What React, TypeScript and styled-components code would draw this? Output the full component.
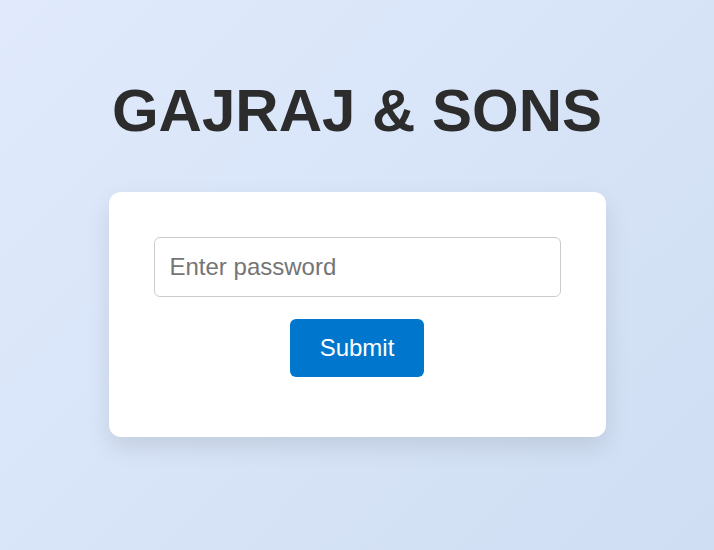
import React from 'react';
import styled, { createGlobalStyle } from 'styled-components';

const GlobalStyle = createGlobalStyle`
  html, body {
    margin: 0;
    padding: 0;
  }
  body {
    font-family: "Liberation Sans", Arial, sans-serif;
  }
`;

const Page = styled.div`
  min-height: 100vh;
  box-sizing: border-box;
  background: linear-gradient(135deg, #e0eafc, #cfdef3);
  display: flex;
  flex-direction: column;
  align-items: center;
  padding-top: 76px;
`;

const Title = styled.h1`
  margin: 0 0 47px;
  font-size: 60px;
  font-weight: 700;
  line-height: 69px;
  color: #2c2c2c;
`;

const Card = styled.form`
  width: 497px;
  box-sizing: border-box;
  background: #fff;
  border-radius: 12px;
  padding: 45px 45px 60px;
  box-shadow: 0 10px 25px rgba(0, 0, 0, 0.1);
  display: flex;
  flex-direction: column;
  align-items: center;
  gap: 22px;
`;

const PasswordInput = styled.input`
  width: 100%;
  box-sizing: border-box;
  padding: 15px;
  font-family: "Liberation Sans", Arial, sans-serif;
  font-size: 24px;
  line-height: normal;
  border: 1px solid #ccc;
  border-radius: 6px;
  color: #222;
  outline: none;

  &::placeholder {
    color: #757575;
  }
`;

const SubmitButton = styled.button`
  padding: 15px 30px;
  font-family: "Liberation Sans", Arial, sans-serif;
  font-size: 24px;
  line-height: normal;
  color: #fff;
  background: #0077cc;
  border: none;
  border-radius: 6px;
  cursor: pointer;
`;

const App: React.FC = () => {
  return (
    <>
      <GlobalStyle />
      <Page>
        <Title>GAJRAJ &amp; SONS</Title>
        <Card onSubmit={(e) => e.preventDefault()}>
          <PasswordInput type="password" placeholder="Enter password" />
          <SubmitButton type="submit">Submit</SubmitButton>
        </Card>
      </Page>
    </>
  );
};

export default App;
